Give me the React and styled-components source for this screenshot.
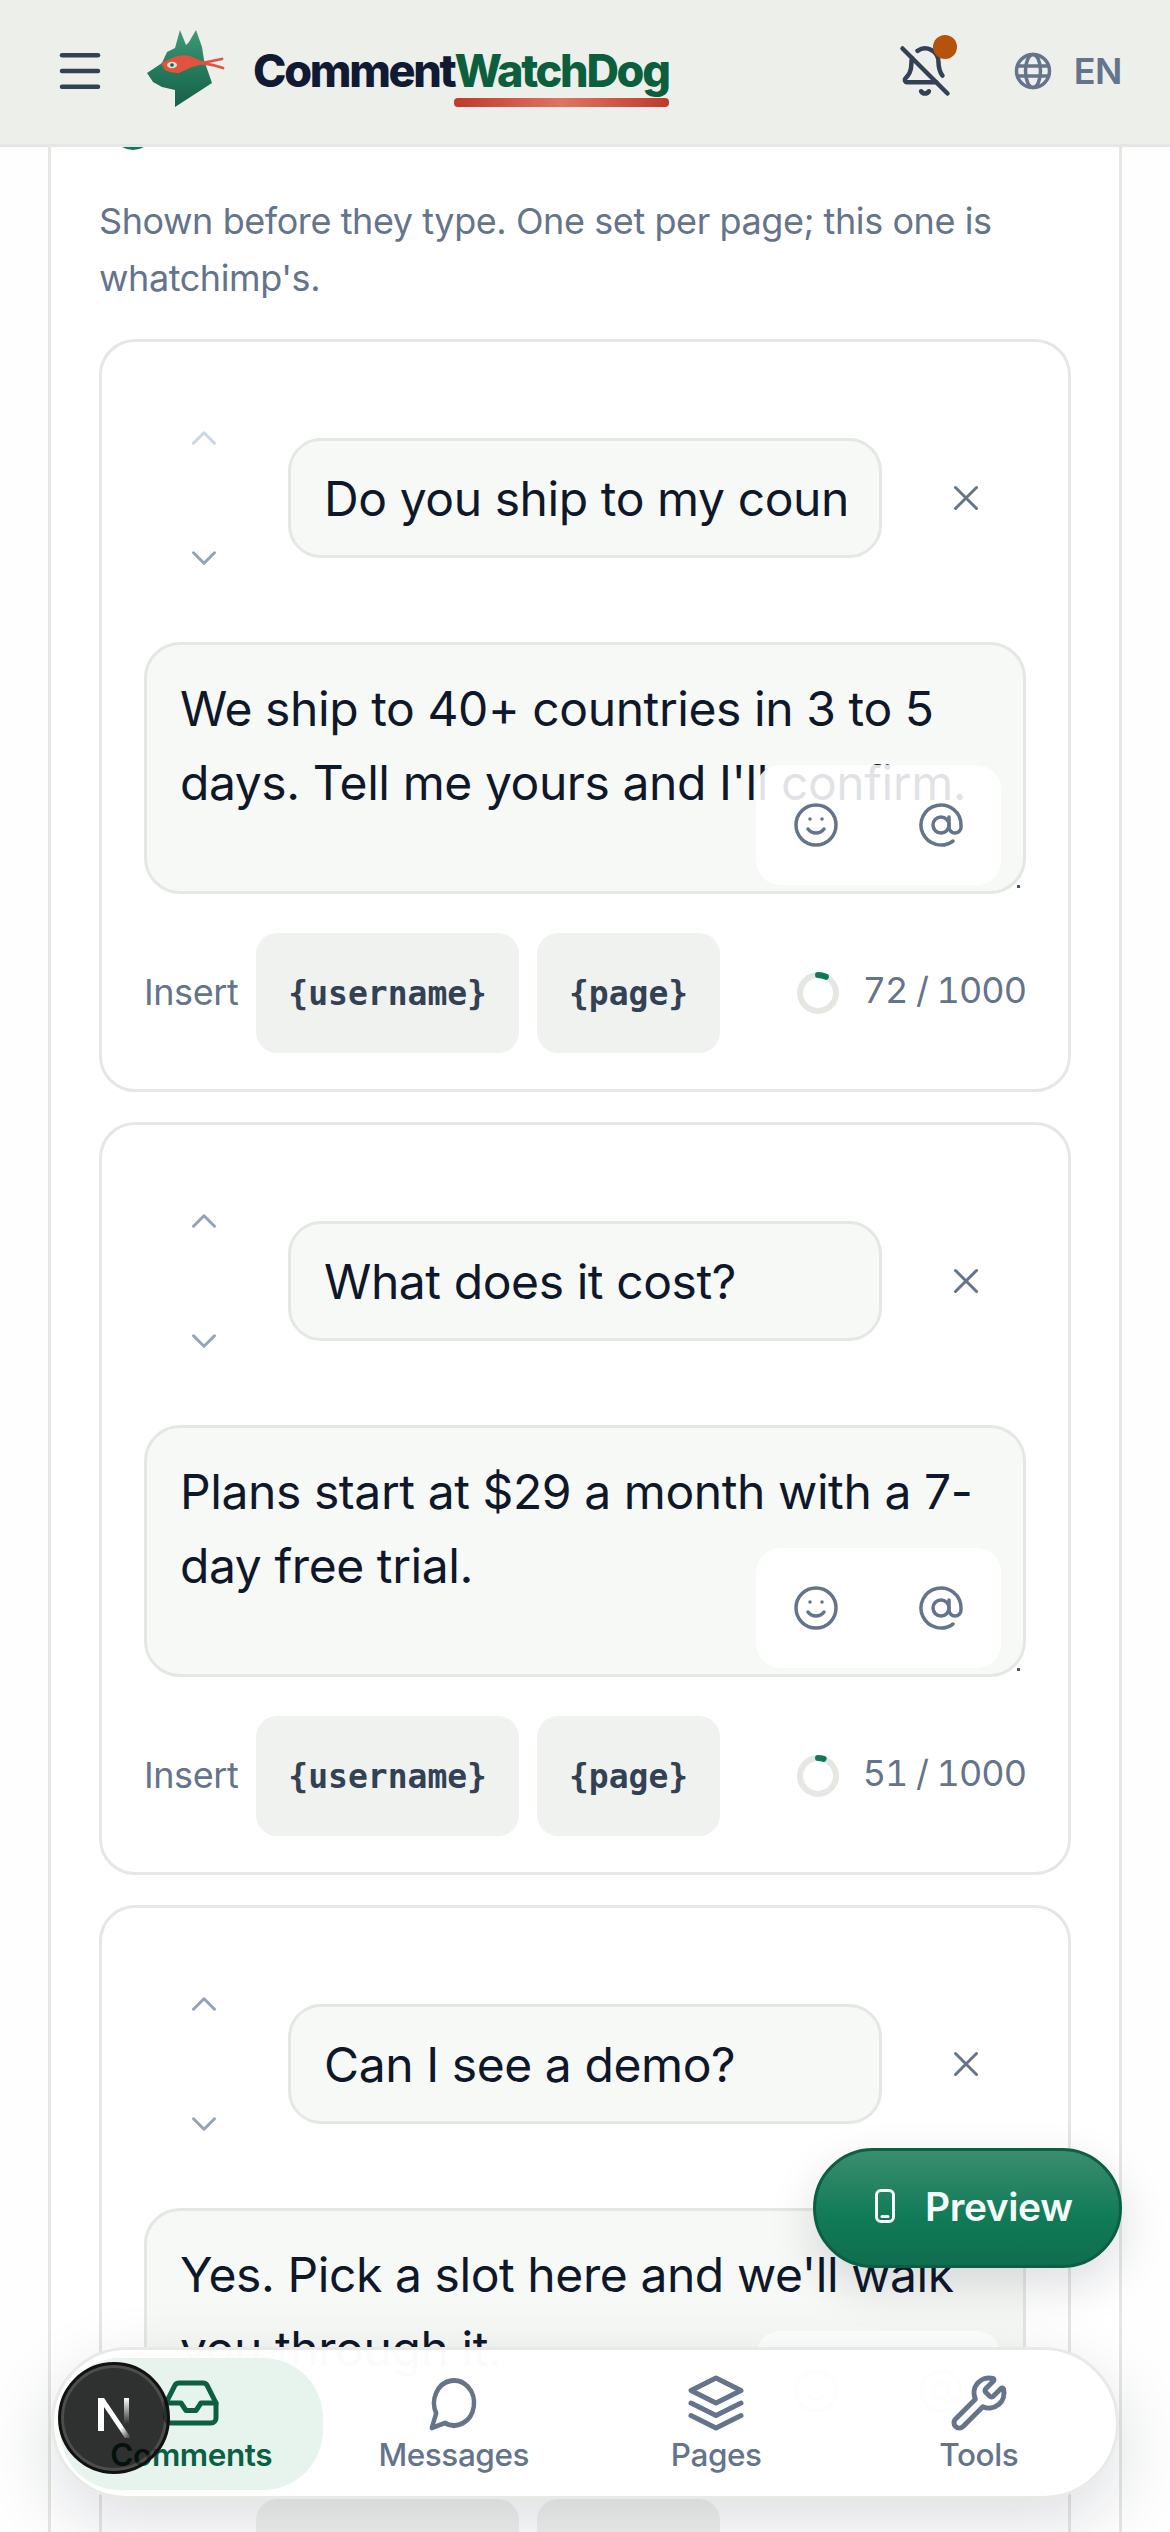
import React from "react";
import styled, {createGlobalStyle} from "styled-components";
import {
    AtSign, BellOff, ChevronDown, ChevronUp, Inbox, Menu, Smile, Wrench, X
} from "lucide-react";

const GlobalStyle = createGlobalStyle`
  html, body {
    margin: 0;
    height: 100%;
    overflow: hidden;
    background-color: #FDFEFD;
  }
  * {
    box-sizing: border-box;
  }
`
const Screen = styled.div`
  position: relative;
  display: flex;
  flex-direction: column;
  height: 100vh;
  overflow: hidden;

  font-family: Inter, "Noto Sans", sans-serif;
  letter-spacing: -0.42px;
  color: #0F172A;
`
const Header = styled.header`
  position: relative;
  z-index: 2;
  flex: none;
  display: flex;
  align-items: center;
  height: 147px;
  padding: 0 48px 3px 53px;

  background-color: #EDEFEB;
  border-bottom: 3px solid #E5E7E3;
`
const MenuButton = styled.div`
  display: flex;
  color: #334155;
`
const Logo = styled.svg`
  flex: none;
  width: 78px;
  height: 78px;
  margin: 0 28px 4px 40px;
`
const Wordmark = styled.div`
  font-size: 45px;
  font-weight: 800;
  line-height: 54px;
  letter-spacing: -2.3px;
  color: #111A33;
`
const Accent = styled.span`
  position: relative;
  color: #0B5F3C;

  &::after {
    content: "";
    position: absolute;
    left: 0;
    right: 0;
    bottom: -9px;
    height: 9px;
    border-radius: 4px;
    background: linear-gradient(90deg, #C0392B 0%, #E07364 50%, #C0392B 100%);
  }
`
const BellButton = styled.div`
  position: relative;
  display: flex;
  margin-left: auto;
  color: #334155;
`
const BellDot = styled.span`
  position: absolute;
  top: -9px;
  right: -5px;
  width: 24px;
  height: 24px;
  border-radius: 50%;
  background-color: #B45309;
`
const LangButton = styled.div`
  display: flex;
  align-items: center;
  gap: 22px;
  margin-left: 62px;

  font-size: 36px;
  font-weight: 600;
  color: #64748B;
`
const Main = styled.main`
  flex: 1;
  min-height: 0;
  padding: 0 48px;
  overflow: hidden;
`
const Panel = styled.section`
  padding: 0 48px;

  background-color: #FFFFFF;
  border-left: 3px solid #E5E7E3;
  border-right: 3px solid #E5E7E3;
`
const StatusRing = styled.div`
  width: 42px;
  height: 42px;
  margin: -39px 0 43px 13px;

  border: 6px solid #0F7A55;
  border-radius: 50%;
`
const Hint = styled.p`
  margin: 0 0 32px;

  font-size: 36px;
  line-height: 57px;
  color: #64748B;
`
const CardList = styled.div`
  display: flex;
  flex-direction: column;
  gap: 30px;
`
const Card = styled.article`
  padding: 42px 42px 36px;

  background-color: #FFFFFF;
  border: 3px solid #E5E7E3;
  border-radius: 36px;
`
const QuestionRow = styled.div`
  display: flex;
  align-items: center;
  gap: 24px;
`
const MoveButtons = styled.div`
  flex: none;
  display: flex;
  flex-direction: column;
  gap: 12px;
  width: 120px;
`
const MoveButton = styled.div`
  display: flex;
  align-items: center;
  justify-content: center;
  height: 108px;

  color: ${props => props.$disabled ? "#CBD5E1" : "#94A3B8"};
`
const QuestionInput = styled.input`
  flex: 1;
  min-width: 0;
  height: 120px;
  padding: 0 33px;

  font: inherit;
  font-size: 48px;
  letter-spacing: inherit;
  color: #0F172A;
  background-color: #F7F9F6;
  border: 3px solid #E5E7E3;
  border-radius: 33px;
  &:focus {
    outline: none;
  }
`
const RemoveButton = styled.div`
  flex: none;
  display: flex;
  align-items: center;
  justify-content: center;
  width: 120px;
  height: 120px;

  color: #64748B;
`
const AnswerBox = styled.div`
  position: relative;
  display: flex;
  margin-top: 30px;
`
const AnswerInput = styled.textarea`
  display: block;
  width: 100%;
  height: 252px;
  padding: 27px 33px;

  font: inherit;
  font-size: 48px;
  line-height: 74.4px;
  letter-spacing: inherit;
  color: #0F172A;
  background-color: #F7F9F6;
  border: 3px solid #E5E7E3;
  border-radius: 36px;
  resize: none;
  overflow: hidden;
  &:focus {
    outline: none;
  }
`
const AnswerTools = styled.div`
  position: absolute;
  right: 25px;
  bottom: 9px;
  display: flex;
  justify-content: space-between;
  width: 245px;
  height: 120px;

  color: #64748B;
  background-color: rgba(255, 255, 255, 0.88);
  border-radius: 24px;
`
const ToolButton = styled.div`
  display: flex;
  justify-content: center;
  width: 120px;
  padding-top: 36px;
`
const ResizeDot = styled.span`
  position: absolute;
  right: 6px;
  bottom: 6px;
  width: 3px;
  height: 3px;

  background-color: #475569;
`
const InsertRow = styled.div`
  display: flex;
  align-items: center;
  gap: 18px;
  margin-top: 39px;
`
const InsertLabel = styled.span`
  padding-bottom: 2px;

  font-size: 36px;
  color: #64748B;
`
const Chip = styled.div`
  display: flex;
  align-items: center;
  height: 120px;
  padding: 0 32px;

  font-family: "DejaVu Sans Mono", "Liberation Mono", monospace;
  font-size: 33px;
  font-weight: 700;
  letter-spacing: 0;
  color: #334155;
  background-color: #F0F2EF;
  border-radius: 21px;
`
const Counter = styled.div`
  display: flex;
  align-items: center;
  gap: 24px;
  margin-left: auto;

  font-size: 36px;
  font-variant-numeric: tabular-nums;
  letter-spacing: -1px;
  color: #64748B;
`
const CounterText = styled.span`
  padding-bottom: 6px;
`
const PreviewButton = styled.div`
  position: absolute;
  right: 48px;
  bottom: 264px;
  z-index: 3;
  display: flex;
  align-items: center;
  gap: 30px;
  width: 309px;
  height: 120px;
  padding: 0 0 4px 59px;

  font-size: 39px;
  font-weight: 600;
  color: #F5FBF8;
  background: linear-gradient(180deg, #3A8D6F 0%, #107A56 60%, #0F6E4F 100%);
  border: 3px solid #0B5F43;
  border-radius: 60px;
  box-shadow: 0 18px 48px rgba(15, 23, 42, 0.14);
`
const BottomNav = styled.nav`
  position: absolute;
  left: 51px;
  right: 51px;
  bottom: 33px;
  z-index: 3;
  display: grid;
  grid-template-columns: repeat(4, 1fr);
  height: 152px;
  padding: 8px 6px 6px;

  background-color: rgba(255, 255, 255, 0.985);
  border: 3px solid #E8EAE6;
  border-radius: 76px;
  box-shadow: 0 24px 72px rgba(15, 23, 42, 0.14);
`
const NavTab = styled.div`
  display: flex;
  flex-direction: column;
  align-items: center;
  gap: 2px;
  padding-top: 15px;

  font-size: 31.5px;
  line-height: 40px;
  font-weight: ${props => props.$active ? 600 : 500};
  color: ${props => props.$active ? "#0B5F43" : "#64748B"};
  background-color: ${props => props.$active ? "#E7F3ED" : "transparent"};
  border-radius: 60px;
`
const DevBadge = styled.div`
  position: absolute;
  left: 58px;
  bottom: 58px;
  z-index: 4;
  display: flex;
  align-items: center;
  justify-content: center;
  width: 112px;
  height: 112px;

  background-color: rgba(0, 0, 0, 0.8);
  border: 3px solid #111111;
  border-radius: 50%;
  box-shadow: inset 0 0 0 3px rgba(255, 255, 255, 0.14);
`

const faqs = [
    {
        id: 1,
        question: "Do you ship to my country?",
        answer: "We ship to 40+ countries in 3 to 5 days. Tell me yours and I'll confirm.",
        count: 72,
        first: true,
    },
    {
        id: 2,
        question: "What does it cost?",
        answer: "Plans start at $29 a month with a 7-day free trial.",
        count: 51,
    },
    {
        id: 3,
        question: "Can I see a demo?",
        answer: "Yes. Pick a slot here and we'll walk you through it.",
        count: 52,
    },
]

const DogLogo = () => (
    <Logo viewBox="0 0 78 78">
        <defs>
            <linearGradient id="dogFill" x1="0" y1="0" x2="0" y2="1">
                <stop offset="0" stopColor="#3F9A78"/>
                <stop offset="0.55" stopColor="#23785A"/>
                <stop offset="1" stopColor="#17604A"/>
            </linearGradient>
        </defs>
        <path
            fill="url(#dogFill)"
            d="M33 0 L39 15 L42 12 L49 0 L55 17 L57 30 L65 53 L28 77 L28 60 L15 57 L6 52 L0 43 L15 33 L20 22 L28 18 Z"
        />
        <path d="M55 33 L75 29 M55 33 L66 35 L76 38" stroke="#E2533F" strokeWidth="2.8" fill="none" strokeLinecap="round"/>
        <path
            fill="#E2533F"
            d="M14 33 L27 27 C33 25 39 25 43 26 L57 32 L57 34 L45 37 L32 43 C26 43 21 42 18 40 Z"
        />
        <ellipse cx="25" cy="35" rx="5" ry="3.2" fill="#CFE3DA"/>
        <circle cx="25" cy="35" r="1.8" fill="#1E5C49"/>
    </Logo>
)

const Globe = () => (
    <svg width="38" height="38" viewBox="0 0 38 38" fill="none" stroke="currentColor" strokeWidth="3.5">
        <circle cx="19" cy="19" r="16.5"/>
        <ellipse cx="19" cy="19" rx="7.5" ry="16.5"/>
        <path d="M3 14 H35 M3 24 H35"/>
    </svg>
)

const Phone = () => (
    <svg width="20" height="34" viewBox="0 0 20 34" fill="none" stroke="currentColor" strokeWidth="3">
        <rect x="1.5" y="1.5" width="17" height="31" rx="4.5"/>
        <path d="M7 27.5 H13" strokeLinecap="round"/>
    </svg>
)

const NextMark = () => (
    <svg width="40" height="44" viewBox="0 0 40 44" fill="none">
        <defs>
            <linearGradient id="nextSlash" x1="0.3" y1="0.3" x2="1" y2="1">
                <stop offset="0.6" stopColor="#FFFFFF"/>
                <stop offset="1" stopColor="#FFFFFF" stopOpacity="0"/>
            </linearGradient>
            <linearGradient id="nextStem" x1="0" y1="0" x2="0" y2="1">
                <stop offset="0" stopColor="#FFFFFF"/>
                <stop offset="1" stopColor="#FFFFFF" stopOpacity="0"/>
            </linearGradient>
        </defs>
        <rect x="4" y="2" width="6" height="33" fill="#FFFFFF"/>
        <path d="M4 2 H10 L37 42 H31 Z" fill="url(#nextSlash)"/>
        <rect x="30" y="2" width="5" height="26" fill="url(#nextStem)"/>
    </svg>
)

// the bubble in the picture is wider than it is tall, so the box is not square
const MessagesIcon = () => (
    <svg
        width="60"
        height="60"
        viewBox="-1.5 0 27 24"
        preserveAspectRatio="none"
        fill="none"
        stroke="currentColor"
        strokeWidth="2"
        strokeLinecap="round"
        strokeLinejoin="round"
    >
        <path d="M7.9 20A9 9 0 1 0 4 16.1L2 22Z"/>
    </svg>
)

const PagesIcon = () => (
    <svg
        width="60"
        height="60"
        viewBox="0 0 24 24"
        fill="none"
        stroke="currentColor"
        strokeWidth="2"
        strokeLinecap="round"
        strokeLinejoin="round"
    >
        <polygon points="12 2 2 7 12 12 22 7 12 2"/>
        <polyline points="2 17 12 22 22 17"/>
        <polyline points="2 12 12 17 22 12"/>
    </svg>
)

const CountRing = ({count}) => {
    let r = 18
    let length = 2 * Math.PI * r
    let part = length * count / 1000
    return (
        <svg width="42" height="42" viewBox="0 0 42 42" fill="none" strokeWidth="6">
            <circle cx="21" cy="21" r={r} stroke="#E5E7E3"/>
            <circle
                cx="21"
                cy="21"
                r={r}
                stroke="#0F7A55"
                strokeLinecap="round"
                strokeDasharray={`${part} ${length}`}
                transform="rotate(-90 21 21)"
            />
        </svg>
    )
}

const FaqCard = ({faq}) => (
    <Card>
        <QuestionRow>
            <MoveButtons>
                <MoveButton $disabled={faq.first}><ChevronUp size={42} strokeWidth={1.75}/></MoveButton>
                <MoveButton><ChevronDown size={42} strokeWidth={1.75}/></MoveButton>
            </MoveButtons>
            <QuestionInput defaultValue={faq.question} readOnly/>
            <RemoveButton><X size={42} strokeWidth={1.75}/></RemoveButton>
        </QuestionRow>
        <AnswerBox>
            <AnswerInput defaultValue={faq.answer} readOnly/>
            <AnswerTools>
                <ToolButton><Smile size={48} strokeWidth={1.75}/></ToolButton>
                <ToolButton><AtSign size={48} strokeWidth={1.75}/></ToolButton>
            </AnswerTools>
            <ResizeDot/>
        </AnswerBox>
        <InsertRow>
            <InsertLabel>Insert</InsertLabel>
            <Chip>{"{username}"}</Chip>
            <Chip>{"{page}"}</Chip>
            <Counter>
                <CountRing count={faq.count}/>
                <CounterText>{faq.count} / 1000</CounterText>
            </Counter>
        </InsertRow>
    </Card>
)

const tabs = [
    {label: "Comments", icon: <Inbox size={60} strokeWidth={2}/>, active: true},
    {label: "Messages", icon: <MessagesIcon/>},
    {label: "Pages", icon: <PagesIcon/>},
    {label: "Tools", icon: <Wrench size={60} strokeWidth={2}/>},
]

const App = () => {
    return (
        <Screen>
            <GlobalStyle/>
            <Header>
                <MenuButton><Menu size={54}/></MenuButton>
                <DogLogo/>
                <Wordmark>Comment<Accent>WatchDog</Accent></Wordmark>
                <BellButton>
                    <BellOff size={54}/>
                    <BellDot/>
                </BellButton>
                <LangButton><Globe/>EN</LangButton>
            </Header>
            <Main>
                <Panel>
                    <StatusRing/>
                    <Hint>Shown before they type. One set per page; this one is whatchimp's.</Hint>
                    <CardList>
                        {faqs.map(faq => <FaqCard key={faq.id} faq={faq}/>)}
                    </CardList>
                </Panel>
            </Main>
            <PreviewButton><Phone/>Preview</PreviewButton>
            <BottomNav>
                {tabs.map(tab => (
                    <NavTab key={tab.label} $active={tab.active}>
                        {tab.icon}
                        {tab.label}
                    </NavTab>
                ))}
            </BottomNav>
            <DevBadge><NextMark/></DevBadge>
        </Screen>
    )
}
export default App;
